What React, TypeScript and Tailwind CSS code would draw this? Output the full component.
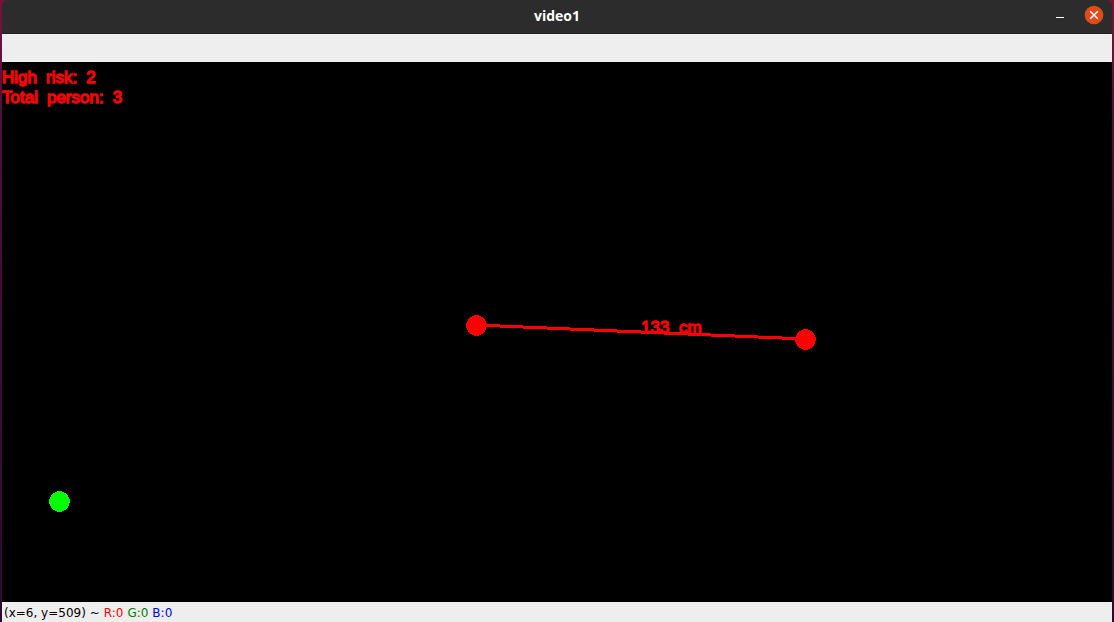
const RISK = '#ff0000';
const SAFE = '#00ff00';

type Person = { x: number; y: number; color: string };

const people: Person[] = [
  { x: 474, y: 263, color: RISK },
  { x: 803, y: 277, color: RISK },
  { x: 57, y: 439, color: SAFE },
];

function TitleBar() {
  return (
    <header className="grid h-[34px] shrink-0 grid-cols-[1fr_auto_1fr] items-center rounded-t-md border-b border-[#231e21] bg-[#2c2c2c] px-2 pb-0.5">
      <h1 className="col-start-2 font-['Open_Sans',sans-serif] text-sm leading-5 font-bold text-white">video1</h1>
      <div className="flex items-center justify-end gap-3 pb-0.5">
        <button type="button" aria-label="Minimize" className="flex size-6 items-center justify-center">
          <svg viewBox="0 0 24 24" className="size-6" shapeRendering="crispEdges">
            <rect x="8" y="14" width="8" height="1" fill="#ffffff" />
          </svg>
        </button>
        <button type="button" aria-label="Close" className="flex size-5 items-center justify-center rounded-full">
          <svg viewBox="0 0 20 20" className="size-5">
            <circle cx="10" cy="10" r="9.3" fill="#e04b19" />
            <path d="M6.2 6.2 13.8 13.8M13.8 6.2 6.2 13.8" stroke="#ffffff" strokeWidth="1.5" />
          </svg>
        </button>
      </div>
    </header>
  );
}

function Stat({ words }: { words: string[] }) {
  return (
    <p className="flex gap-[9px]">
      {words.map((word) => (
        <span key={word}>{word}</span>
      ))}
    </p>
  );
}

function Viewport() {
  const [a, b] = people;
  return (
    <main className="relative grow bg-black">
      <svg viewBox="0 0 1110 540" className="block w-full" shapeRendering="crispEdges">
        <line x1={a.x} y1={a.y} x2={b.x} y2={b.y} stroke={RISK} strokeWidth="3" />
        {people.map((p) => (
          <circle key={p.x} cx={p.x + 0.5} cy={p.y + 0.5} r="10.4" fill={p.color} />
        ))}
        <text
          y="271"
          fill={RISK}
          stroke={RISK}
          strokeWidth="1.3"
          strokeLinejoin="round"
          className="font-['Liberation_Sans',sans-serif] text-[17px]"
        >
          <tspan x="639">133</tspan>
          <tspan x="677">cm</tspan>
        </text>
      </svg>
      <div className="absolute top-1.5 left-0 font-['Liberation_Sans',sans-serif] text-[17px] leading-5 text-[#ff0000] [-webkit-text-stroke:1.3px_#ff0000]">
        <Stat words={['High', 'risk:', '2']} />
        <Stat words={['Total', 'person:', '3']} />
      </div>
    </main>
  );
}

function StatusBar() {
  return (
    <footer className="flex h-5 shrink-0 items-center gap-1 bg-[#eeeeee] px-0.5 pt-0.5 font-['DejaVu_Sans',sans-serif] text-xs text-black">
      <span>(x=6, y=509) ~</span>
      <span className="text-[#ff0000]">R:0</span>
      <span className="text-[#008000]">G:0</span>
      <span className="text-[#0000ff]">B:0</span>
    </footer>
  );
}

export default function App() {
  return (
    <div className="min-h-screen bg-linear-to-b from-[#7a1238] via-[#4d0d40] via-20% to-[#2e0835] px-0.5">
      <div className="flex min-h-screen flex-col">
        <TitleBar />
        <div className="h-7 shrink-0 bg-[#eeeeee]" />
        <Viewport />
        <StatusBar />
      </div>
    </div>
  );
}
